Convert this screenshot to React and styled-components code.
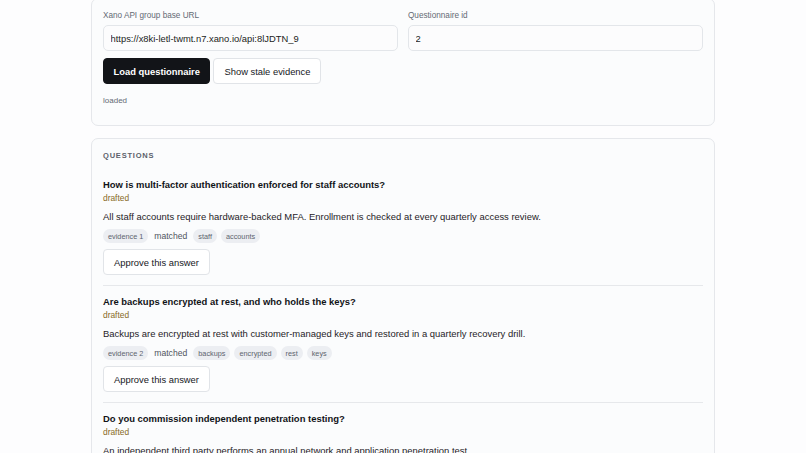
import React, { useState } from 'react';
import styled, { createGlobalStyle } from 'styled-components';

const GlobalStyle = createGlobalStyle`
  * { box-sizing: border-box; }
  body {
    margin: 0;
    background: #fdfdfe;
    font-family: "Liberation Sans", Arial, Helvetica, sans-serif;
    color: #16181d;
  }
`;

const Page = styled.main`
  max-width: 624px;
  margin: -2px auto 0;
  display: flex;
  flex-direction: column;
  gap: 12px;
  padding-bottom: 40px;
`;

const Card = styled.section`
  background: #fbfcfd;
  border: 1px solid #e5e7eb;
  border-radius: 7px;
  padding: 12px 11px ${p => (p.$tall ? '19px' : '12px')};
`;

const Fields = styled.div`
  display: grid;
  grid-template-columns: 1fr 1fr;
  gap: 10px;
`;

const Field = styled.label`
  display: flex;
  flex-direction: column;
  gap: 4px;
`;

const Label = styled.span`
  font-size: 8.2px;
  line-height: 10px;
  color: #646a74;
`;

const Input = styled.input`
  height: 26px;
  border: 1px solid #e3e6ea;
  border-radius: 5px;
  background: #fcfcfd;
  padding: 0 6.5px;
  font: inherit;
  font-size: 9.4px;
  color: #1b1d22;
  outline: none;
`;

const Actions = styled.div`
  display: flex;
  gap: 3px;
  margin-top: 7px;
`;

const Button = styled.button`
  height: 26px;
  padding: 0 ${p => (p.$primary ? '9.5px' : '10px')};
  border-radius: 4px;
  font: inherit;
  font-size: 9.4px;
  font-weight: ${p => (p.$primary ? 700 : 400)};
  color: ${p => (p.$primary ? '#ffffff' : '#16181d')};
  background: ${p => (p.$primary ? '#121418' : '#ffffff')};
  border: 1px solid ${p => (p.$primary ? '#121418' : '#e1e4e8')};
  cursor: pointer;
`;

const Status = styled.p`
  margin: 12px 0 0;
  font-size: 8px;
  line-height: 10px;
  color: #646a74;
`;

const SectionTitle = styled.h2`
  margin: 0;
  font-size: 7.5px;
  line-height: 9px;
  font-weight: 700;
  letter-spacing: 0.8px;
  color: #5b616b;
`;

const List = styled.div`
  display: flex;
  flex-direction: column;
  margin-top: 8px;
`;

const Item = styled.article`
  padding: 10px 0;
  border-top: 1px solid ${p => (p.$first ? 'transparent' : '#e6e8eb')};
`;

const Question = styled.h3`
  margin: 0;
  font-size: 9.45px;
  line-height: 11px;
  font-weight: 700;
  color: #111317;
`;

const State = styled.div`
  margin-top: 4px;
  font-size: 8.4px;
  line-height: 9px;
  color: #876a24;
`;

const Answer = styled.p`
  margin: 8px 0 0;
  font-size: 9.45px;
  line-height: 11px;
  color: #1f2227;
`;

const Meta = styled.div`
  display: flex;
  align-items: center;
  gap: 4px;
  margin-top: 7px;
  height: 14px;
`;

const Chip = styled.span`
  display: inline-flex;
  align-items: center;
  height: 14px;
  padding: 0 5px;
  border-radius: 7px;
  background: #eceef2;
  font-size: 7.3px;
  color: #5d646e;
`;

const Matched = styled.span`
  font-size: 8.6px;
  color: #4f555e;
  padding: 0 2px;
`;

const ApproveRow = styled.div`
  margin-top: 6px;
`;

const questions = [
  {
    id: 1,
    text: 'How is multi-factor authentication enforced for staff accounts?',
    answer:
      'All staff accounts require hardware-backed MFA. Enrollment is checked at every quarterly access review.',
    evidence: 'evidence 1',
    terms: ['staff', 'accounts'],
  },
  {
    id: 2,
    text: 'Are backups encrypted at rest, and who holds the keys?',
    answer:
      'Backups are encrypted at rest with customer-managed keys and restored in a quarterly recovery drill.',
    evidence: 'evidence 2',
    terms: ['backups', 'encrypted', 'rest', 'keys'],
  },
  {
    id: 3,
    text: 'Do you commission independent penetration testing?',
    answer:
      'An independent third party performs an annual network and application penetration test.',
    evidence: 'evidence 3',
    terms: ['independent', 'penetration'],
  },
];

export default function App() {
  const [baseUrl, setBaseUrl] = useState('https://x8ki-letl-twmt.n7.xano.io/api:8lJDTN_9');
  const [qid, setQid] = useState('2');

  return (
    <>
      <GlobalStyle />
      <Page>
        <Card $tall>
          <Fields>
            <Field>
              <Label>Xano API group base URL</Label>
              <Input value={baseUrl} onChange={e => setBaseUrl(e.target.value)} />
            </Field>
            <Field>
              <Label>Questionnaire id</Label>
              <Input value={qid} onChange={e => setQid(e.target.value)} />
            </Field>
          </Fields>
          <Actions>
            <Button $primary>Load questionnaire</Button>
            <Button>Show stale evidence</Button>
          </Actions>
          <Status>loaded</Status>
        </Card>

        <Card>
          <SectionTitle>QUESTIONS</SectionTitle>
          <List>
            {questions.map((q, i) => (
              <Item key={q.id} $first={i === 0}>
                <Question>{q.text}</Question>
                <State>drafted</State>
                <Answer>{q.answer}</Answer>
                <Meta>
                  <Chip>{q.evidence}</Chip>
                  <Matched>matched</Matched>
                  {q.terms.map(t => (
                    <Chip key={t}>{t}</Chip>
                  ))}
                </Meta>
                <ApproveRow>
                  <Button>Approve this answer</Button>
                </ApproveRow>
              </Item>
            ))}
          </List>
        </Card>
      </Page>
    </>
  );
}
